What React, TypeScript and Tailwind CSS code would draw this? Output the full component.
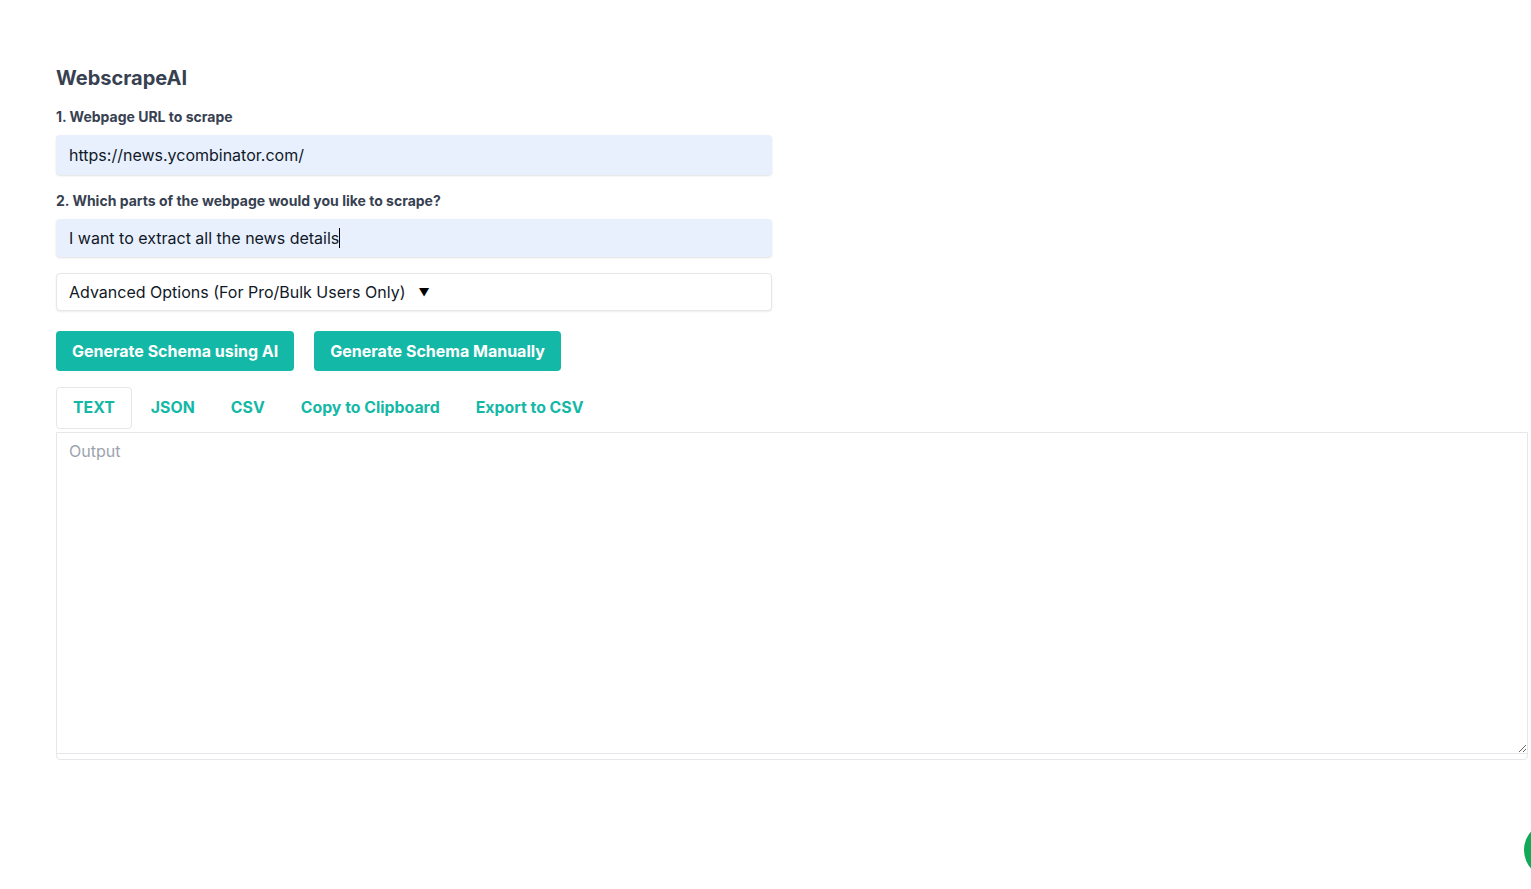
import React from "react";

export default function App() {
  const tabs = ["TEXT", "JSON", "CSV", "Copy to Clipboard", "Export to CSV"];
  return (
    <div
      className="relative min-h-screen bg-white overflow-hidden"
      style={{ fontFamily: "Inter, 'Noto Sans', sans-serif" }}
    >
      <div className="pl-14 pr-[3px] pt-[64px]">
        <h1 className="text-[20px] font-bold text-[#374151] leading-[28px]">WebscrapeAI</h1>

        <div className="w-[716px]">
          <label className="block mt-[15px] text-[14px] font-bold text-[#374151] leading-[20px]">
            1. Webpage URL to scrape
          </label>
          <input
            readOnly
            value="https://news.ycombinator.com/"
            className="mt-[8px] block w-full h-[40px] px-[13px] rounded-[4px] bg-[#e8f0fe] text-[16px] text-[#111827] shadow-[0_1px_2px_rgba(0,0,0,0.12)] outline-none"
          />

          <label className="block mt-[16px] text-[14px] font-bold text-[#374151] leading-[20px]">
            2. Which parts of the webpage would you like to scrape?
          </label>
          <div className="mt-[8px] flex items-center w-full h-[38px] px-[13px] rounded-[4px] bg-[#e8f0fe] text-[16px] text-[#111827] shadow-[0_1px_2px_rgba(0,0,0,0.12)]">
            I want to extract all the news details
            <span className="inline-block w-px h-[20px] bg-black" />
          </div>

          <div className="mt-[16px] flex items-center w-full h-[38px] px-3 rounded-[4px] bg-white border border-[#e5e7eb] shadow-[0_1px_2px_rgba(0,0,0,0.08)] text-[16px] text-[#111827]">
            Advanced Options (For Pro/Bulk Users Only)
            <span className="ml-[13px] text-[11px] text-black">▼</span>
          </div>
        </div>

        <div className="mt-[20px] flex gap-5">
          <button className="h-[40px] px-4 rounded-[4px] bg-[#14b8a6] text-white text-[16px] font-bold">
            Generate Schema using AI
          </button>
          <button className="h-[40px] px-4 rounded-[4px] bg-[#14b8a6] text-white text-[16px] font-bold">
            Generate Schema Manually
          </button>
        </div>

        <div className="mt-[16px] flex">
          {tabs.map((t, i) => (
            <div
              key={t}
              className={`h-[42px] px-4 mr-[2px] flex items-center text-[15.85px] font-bold text-[#14b8a6] rounded-[4px] border ${
                i === 0 ? "border-[#e5e7eb]" : "border-transparent"
              }`}
            >
              {t}
            </div>
          ))}
        </div>

        <div className="mt-[3px] border border-[#e5e7eb] rounded-b-[4px] pb-[5px]">
          <textarea
            placeholder="Output"
            className="block w-full h-[321px] px-3 py-[6px] text-[16px] text-[#111827] placeholder:text-[#9ca3af] border-b border-[#e5e7eb] outline-none resize-y"
          />
        </div>
      </div>

      <div className="absolute left-[1524px] top-[822px] w-[56px] h-[56px] rounded-full bg-[#0fa958]" />
    </div>
  );
}
